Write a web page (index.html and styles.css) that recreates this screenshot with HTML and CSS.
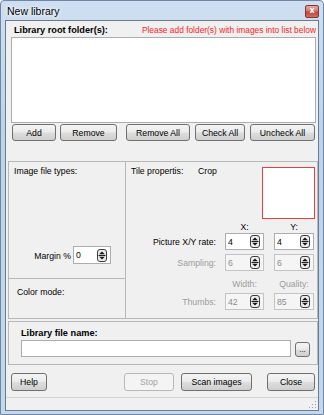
FILE: index.html
```html
<!DOCTYPE html>
<html lang="en">
<head>
    <meta charset="UTF-8">
    <meta name="viewport" content="width=device-width, initial-scale=1.0">
    <title>New library</title>
    <link rel="stylesheet" href="styles.css">
</head>
<body>
    <svg class="defs" width="0" height="0">
        <symbol id="spin" viewBox="0 0 10 13">
            <rect x="0.5" y="0.5" width="9" height="12" rx="2.5" fill="#ececec" stroke="#3c3c3c"/>
            <path d="M2.2 5.2 L5 2.4 L7.8 5.2 Z" fill="#111"/>
            <path d="M1.5 6.5 H8.5" stroke="#222" stroke-width="1"/>
            <path d="M2.2 7.8 L5 10.6 L7.8 7.8 Z" fill="#111"/>
        </symbol>
    </svg>

    <div class="window">
        <div class="titlebar">
            <span class="title">New library</span>
            <div class="close-btn">x</div>
        </div>

        <div class="client">
            <!-- Root folders -->
            <div class="folder-head">
                <span class="bold">Library root folder(s):</span>
                <span class="hint">Please add folder(s) with images into list below</span>
            </div>
            <div class="listbox"></div>
            <div class="list-buttons">
                <button class="btn btn-add">Add</button>
                <button class="btn btn-remove">Remove</button>
                <button class="btn btn-remove-all">Remove All</button>
                <button class="btn btn-check">Check All</button>
                <button class="btn btn-uncheck">Uncheck All</button>
            </div>

            <!-- Options -->
            <div class="options">
                <div class="col-left">
                    <div class="file-types">
                        <span>Image file types:</span>
                        <div class="margin-row">
                            <span class="margin-label">Margin %</span>
                            <div class="spin spin-margin">
                                <span>0</span>
                                <svg width="10" height="13"><use href="#spin"/></svg>
                            </div>
                        </div>
                    </div>
                    <div class="color-mode">Color mode:</div>
                </div>

                <div class="col-right">
                    <div class="tile-head">
                        <span class="tile-label">Tile propertis:</span>
                        <span>Crop</span>
                        <div class="preview"></div>
                    </div>
                    <div class="tile-grid">
                        <span></span>
                        <span class="head">X:</span>
                        <span class="head">Y:</span>

                        <span class="row-label">Picture X/Y rate:</span>
                        <div class="spin"><span>4</span><svg width="10" height="13"><use href="#spin"/></svg></div>
                        <div class="spin spin-y"><span>4</span><svg width="10" height="13"><use href="#spin"/></svg></div>

                        <span class="row-label off">Sampling:</span>
                        <div class="spin off"><span>6</span><svg width="10" height="13"><use href="#spin"/></svg></div>
                        <div class="spin spin-y off"><span>6</span><svg width="10" height="13"><use href="#spin"/></svg></div>

                        <span></span>
                        <span class="head off">Width:</span>
                        <span class="head off">Quality:</span>

                        <span class="row-label off">Thumbs:</span>
                        <div class="spin off"><span>42</span><svg width="10" height="13"><use href="#spin"/></svg></div>
                        <div class="spin spin-y off"><span>85</span><svg width="10" height="13"><use href="#spin"/></svg></div>
                    </div>
                </div>
            </div>

            <!-- File name -->
            <div class="file-panel">
                <span class="bold">Library file name:</span>
                <div class="file-row">
                    <div class="file-input"></div>
                    <button class="btn btn-browse">...</button>
                </div>
            </div>

            <div class="bottom-buttons">
                <button class="btn btn-help">Help</button>
                <button class="btn btn-stop" disabled>Stop</button>
                <button class="btn btn-scan">Scan images</button>
                <button class="btn btn-close">Close</button>
            </div>

            <div class="statusbar">
                <svg class="grip" width="8" height="8" viewBox="0 0 8 8">
                    <rect x="6" y="0" width="1" height="1" fill="#a0a0a0"/>
                    <rect x="3" y="3" width="1" height="1" fill="#a0a0a0"/>
                    <rect x="6" y="3" width="1" height="1" fill="#a0a0a0"/>
                    <rect x="0" y="6" width="1" height="1" fill="#a0a0a0"/>
                    <rect x="3" y="6" width="1" height="1" fill="#a0a0a0"/>
                    <rect x="6" y="6" width="1" height="1" fill="#a0a0a0"/>
                </svg>
            </div>
        </div>
    </div>
</body>
</html>
```

FILE: styles.css
```css
body {
    margin: 0;
    background: #fff;
    color: #000;
    font-family: "Liberation Sans", Arial, sans-serif;
    font-size: 8.7px;
}

.defs {
    position: absolute;
    width: 0;
    height: 0;
}

.bold {
    font-weight: bold;
    font-size: 9.2px;
}

.off {
    color: #9c9c9c;
}

/* Window frame */
.window {
    width: 324px;
    height: 415px;
    box-sizing: border-box;
    border: 1px solid #6f87a2;
    border-radius: 4px 4px 0 0;
    padding: 0 4px 3px;
    background: linear-gradient(#cfdff1, #bed3ea 30%, #c4d7ed);
    display: flex;
    flex-direction: column;
}

.titlebar {
    height: 19px;
    display: flex;
    align-items: center;
    justify-content: space-between;
    padding-left: 2px;
}

.title {
    font-size: 10.5px;
    text-shadow: 0 0 5px #fff, 0 0 3px #fff;
}

.close-btn {
    width: 14px;
    height: 13px;
    box-sizing: border-box;
    margin-top: 1px;
    border: 1px solid #7b3a35;
    border-radius: 2px;
    background: linear-gradient(#e6a99f, #d3786c 45%, #c2463a 55%, #d46a5c);
    color: #fff;
    font: bold 8px/10px "DejaVu Sans", sans-serif;
    text-align: center;
}

.client {
    flex: 1;
    border: 1px solid #6c7c8e;
    background: #f0f0f0;
    display: flex;
    flex-direction: column;
}

/* Root folders */
.folder-head {
    display: flex;
    justify-content: space-between;
    align-items: center;
    height: 12px;
    padding: 3px 2px 0 8px;
}

.hint {
    color: #f51f1f;
    font-size: 8.4px;
}

.listbox {
    height: 86px;
    margin: 1px 2px 0 5px;
    box-sizing: border-box;
    border: 1px solid #abadb3;
    background: #fff;
}

.list-buttons {
    display: flex;
    margin: 1px 0 0 6px;
}

.btn {
    box-sizing: border-box;
    height: 17px;
    padding: 0;
    border: 1px solid #707070;
    border-radius: 3px;
    background: linear-gradient(#f4f4f4, #ebebeb 48%, #dddddd 52%, #cfcfcf);
    font: inherit;
    color: #000;
    line-height: 14px;
    text-align: center;
}

.btn-add { width: 44px; }
.btn-remove { width: 57px; margin-left: 4px; }
.btn-remove-all { width: 64px; margin-left: 9px; }
.btn-check { width: 50px; margin-left: 5px; }
.btn-uncheck { width: 65px; margin-left: 5px; }

/* Options */
.options {
    display: flex;
    height: 158px;
    box-sizing: border-box;
    margin: 20px 0 0 2px;
    border: 1px solid #b8b8b8;
}

.col-left {
    width: 116px;
    border-right: 1px solid #b8b8b8;
    display: flex;
    flex-direction: column;
}

.file-types {
    height: 117px;
    box-sizing: border-box;
    padding: 3px 0 14px 5px;
    border-bottom: 1px solid #b8b8b8;
    display: flex;
    flex-direction: column;
    justify-content: space-between;
    line-height: 12px;
}

.margin-row {
    display: flex;
    align-items: center;
    justify-content: flex-end;
    margin-right: 14px;
}

.margin-label {
    margin: 1px 2px 0 0;
}

.color-mode {
    flex: 1;
    padding: 7px 0 0 8px;
    line-height: 12px;
}

.col-right {
    flex: 1;
    padding: 5px 2px 0 5px;
}

.tile-head {
    display: flex;
    align-items: flex-start;
    line-height: 12px;
}

.tile-head span {
    margin-top: -2px;
}

.tile-label {
    width: 67px;
}

.preview {
    margin-left: auto;
    width: 53px;
    height: 52px;
    box-sizing: border-box;
    border: 1px solid #e8403e;
    background: #fff;
}

.tile-grid {
    display: grid;
    grid-template-columns: 85px 39px 1fr;
    grid-template-rows: 13px 21px 21px 18px 17px;
    column-gap: 9px;
    margin-top: 1px;
}

.head {
    text-align: center;
    align-self: center;
    line-height: 12px;
}

.row-label {
    text-align: right;
    padding-top: 3px;
    line-height: 12px;
}

/* Spin edits */
.spin {
    display: flex;
    align-items: center;
    justify-content: space-between;
    align-self: start;
    height: 17px;
    box-sizing: border-box;
    padding: 0 3px 0 2px;
    border: 1px solid #abadb3;
    background: #fff;
}

.spin svg {
    display: block;
}

.spin.off {
    border-color: #c4c4c4;
    background: #f5f5f5;
    color: #8c8c8c;
}

.spin-y {
    width: 40px;
    justify-self: end;
    margin-right: 1px;
}

.spin-margin {
    width: 38px;
    height: 18px;
}

/* File name */
.file-panel {
    height: 44px;
    box-sizing: border-box;
    margin: 2px 0 0 2px;
    padding: 5px 0 0 12px;
    border: 1px solid #b8b8b8;
    line-height: 12px;
}

.file-row {
    display: flex;
    align-items: flex-end;
    margin-top: 1px;
}

.file-input {
    width: 270px;
    height: 17px;
    box-sizing: border-box;
    border: 1px solid #abadb3;
    background: #fff;
}

.btn-browse {
    width: 15px;
    height: 15px;
    margin-left: 4px;
    line-height: 10px;
    font-size: 8px;
}

/* Bottom */
.bottom-buttons {
    display: flex;
    margin: 8px 0 0 5px;
}

.bottom-buttons .btn {
    height: 18px;
    line-height: 15px;
}

.btn-help { width: 36px; }
.btn-stop { width: 50px; margin-left: 77px; }
.btn-scan { width: 71px; margin-left: 7px; }
.btn-close { width: 48px; margin-left: 15px; }

.bottom-buttons .btn-stop {
    border-color: #b5b9bc;
    background: #f4f4f4;
    color: #a3a3a3;
}

.statusbar {
    flex: 1;
    margin-top: 6px;
    border-top: 1px solid #d4d4d4;
    display: flex;
    justify-content: flex-end;
    align-items: flex-end;
    padding: 0 1px 1px 0;
}
```
